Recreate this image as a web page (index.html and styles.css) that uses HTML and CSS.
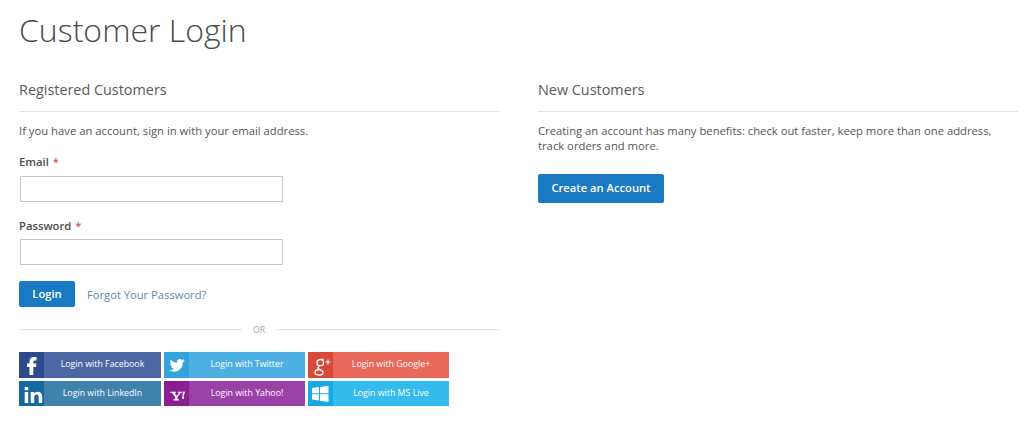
FILE: index.html
```html
<!DOCTYPE html>
<html lang="en">
<head>
<meta charset="utf-8">
<title>Customer Login</title>
<link rel="stylesheet" href="styles.css">
</head>
<body>
<main class="page">
  <h1 class="title">Customer Login</h1>
  <div class="columns">
    <section class="col">
      <h2 class="col-head">Registered Customers</h2>
      <p class="note">If you have an account, sign in with your email address.</p>
      <form class="form">
        <label class="label">Email <span class="req">*</span></label>
        <div class="input"></div>
        <label class="label label-pw">Password <span class="req">*</span></label>
        <div class="input input-pw"></div>
        <div class="actions">
          <span class="btn btn-login">Login</span>
          <a class="link">Forgot Your Password?</a>
        </div>
      </form>
      <div class="or"><span class="or-line"></span><span class="or-text">OR</span><span class="or-line"></span></div>
      <div class="social">
        <a class="sbtn fb"><span class="ico"><svg width="25" height="26" viewBox="0 0 25 26"><path fill="#fff" d="M10.500 23V15H8v-3.500h2.500V9.500C10.500 6.800 12 5 14.800 5H17.500v3.500h-1.600c-1.100 0-1.600.6-1.600 1.600v1.400h3.200l-.5 3.500h-2.700v8z"/></svg></span><span class="stext">Login with Facebook</span></a>
        <a class="sbtn tw"><span class="ico"><svg width="25" height="26" viewBox="0 0 25 26"><path transform="translate(2.900 2.300) scale(.8)" fill="#fff" d="M22 7.500c-.8.4-1.500.6-2.300.7.800-.5 1.500-1.200 1.800-2.200-.8.500-1.600.8-2.500 1-1.600-1.700-4.100-1.500-5.500 0-.9 1-1.200 2.300-.9 3.500C9.300 10.300 6.500 8.900 4.500 6.500c-1 1.800-.5 4.100 1.200 5.300-.6 0-1.200-.2-1.800-.5 0 1.900 1.300 3.600 3.200 4-.6.200-1.200.2-1.800.1.500 1.600 2 2.700 3.700 2.800-1.700 1.300-3.800 1.900-5.900 1.700 5.300 3.300 11.500 1.700 14.500-2.500 1.500-2.100 2.300-4.600 2.200-7.100.8-.6 1.600-1.300 2.200-2.300z"/></svg></span><span class="stext">Login with Twitter</span></a>
        <a class="sbtn gp"><span class="ico"><svg width="25" height="26" viewBox="0 0 25 26"><path transform="translate(3 1)" fill="none" stroke="#fff" stroke-width="1.300" d="M12.500 6.500h-2.800c-2.200 0-3.700 1.300-3.700 3.200s1.400 3.100 3.300 3.100 3.300-1.400 3.300-3.200-1.300-3.100-2.900-3.100M8 13.500c-1.300 1-1.300 2 0 2.700l2.500 1.200c2.500 1.300 2 4.600-2 4.600-3 0-4.500-1.200-4.500-2.600 0-1.700 2-2.700 4.500-2.700"/><path fill="none" stroke="#fff" stroke-width="1.200" d="M17.500 10h5M20 7.500v5"/></svg></span><span class="stext">Login with Google+</span></a>
        <a class="sbtn li"><span class="ico"><svg width="25" height="26" viewBox="0 0 25 26"><path transform="translate(2.700 0)" fill="#fff" d="M3 11h3.500v11H3zM3 6h3.500v3.200H3zM9 11h3.400v1.600c.7-1.200 2-1.900 3.500-1.900 3 0 4.600 1.800 4.600 5V22H17v-5.700c0-1.700-.7-2.700-2.100-2.700s-2.400 1-2.400 2.700V22H9z"/></svg></span><span class="stext">Login with LinkedIn</span></a>
        <a class="sbtn ya"><span class="ico"><svg width="25" height="26" viewBox="0 0 25 26"><path transform="translate(1.800 2.500) scale(.88)" fill="#fff" d="M5 9.500h6.500v1.100H10l2.500 3.600 2.600-3.600h-1.500V9.500h4.900v1.100h-1.300l-3.900 4.800v2.600h1.700v1.200H8.700V18h2v-2.600l-3.800-4.800H5zM19.500 9l2.500.4-2 5.600-1.200-.2zM18.300 16.200a1.300 1.300 0 1 0 2.600 0 1.300 1.300 0 1 0-2.600 0z"/></svg></span><span class="stext">Login with Yahoo!</span></a>
        <a class="sbtn ms"><span class="ico"><svg width="25" height="26" viewBox="0 0 25 26"><path fill="#fff" d="M4 7l7-1v6.300H4zM12 5.900l8.500-1.200v7.600H12zM4 13.300h7v6.300l-7-1zM12 13.300h8.500v7.600L12 19.700z"/></svg></span><span class="stext">Login with MS Live</span></a>
      </div>
    </section>
    <section class="col">
      <h2 class="col-head">New Customers</h2>
      <p class="note note-new">Creating an account has many benefits: check out faster, keep more than one address, track orders and more.</p>
      <span class="btn btn-create">Create an Account</span>
    </section>
  </div>
</main>
</body>
</html>
```
FILE: styles.css
```css
* { box-sizing: border-box; }
html, body { margin: 0; background: #fff; }
body {
  height: 423px;
  overflow: hidden;
  font-family: "Open Sans", sans-serif;
  color: #4f4f4f;
}
.page { padding: 8px 6px 0 19px; }
.title {
  margin: 0;
  font-size: 32px;
  line-height: 44px;
  font-weight: 300;
  color: #4a4a4a;
}
.columns { display: flex; gap: 39px; margin-top: 16px; }
.col { width: 480px; flex: none; }
.col-head {
  margin: 0;
  height: 44px;
  padding-top: 12px;
  font-size: 14.4px;
  line-height: 20px;
  font-weight: 400;
  color: #5a5a5a;
  border-bottom: 1px solid #e4e4e4;
}
.note { margin: 11px 0 0; font-size: 11.28px; line-height: 15px; color: #555; }
.note-new { margin-bottom: 21px; width: 470px; }
.form { margin-top: 16px; }
.label { display: block; font-size: 11.28px; line-height: 16px; font-weight: 600; color: #4c4c4c; }
.label-pw { margin-top: 16px; }
.req { color: #d9534f; margin-left: 1px; }
.input {
  width: 263px;
  height: 26px;
  margin: 6px 0 0 1px;
  background: #fff;
  border: 1px solid #c8c8c8;
}
.input-pw { margin-top: 5px; }
.actions { display: flex; align-items: center; gap: 12px; margin-top: 16px; }
.btn {
  display: inline-block;
  background: #1979c3;
  color: #fff;
  font-size: 11.2px;
  font-weight: 600;
  border-radius: 2px;
  text-align: center;
  border: 1px solid #1979c3;
}
.btn-login { width: 56px; height: 26px; line-height: 24px; }
.btn-create { width: 126px; height: 29px; line-height: 26px; }
.link { font-size: 11.2px; color: #5f87a8; }
.or { display: flex; align-items: center; margin-top: 14px; height: 16px; }
.or-line { flex: 1; height: 1px; background: #e4e4e4; }
.or-text { width: 35px; text-align: center; font-size: 8.5px; color: #a8a8a8; }
.social {
  display: grid;
  grid-template-columns: 142px 141px 141px;
  grid-template-rows: 26px 25px;
  column-gap: 3px;
  row-gap: 3px;
  margin-top: 15px;
  width: 430px;
}
.sbtn { display: flex; color: #fff; }
.ico { width: 25px; flex: none; display: flex; align-items: center; justify-content: center; }
.stext { flex: 1; text-align: center; font-size: 8.8px; line-height: 24px; }
.fb { background: #4d67a3; } .fb .ico { background: #2b4a8b; }
.tw { background: #4eb0e2; } .tw .ico { background: #35a2dc; }
.gp { background: #e8695a; } .gp .ico { background: #d9493a; }
.li { background: #3f83ad; } .li .ico { background: #14699e; }
.ya { background: #9a41a8; } .ya .ico { background: #8a2090; }
.ms { background: #33bbee; } .ms .ico { background: #18a9e4; }
```
